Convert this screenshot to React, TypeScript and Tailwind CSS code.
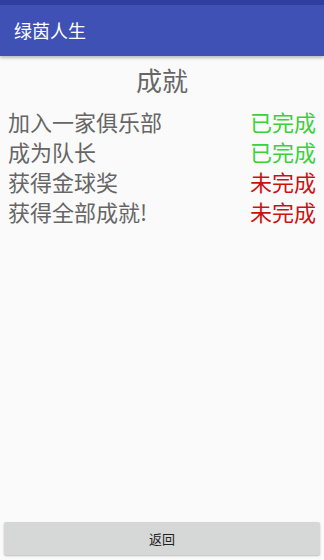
const font = { fontFamily: '"Noto Sans CJK SC", "Noto Sans", sans-serif' };

const items = [
  { name: "加入一家俱乐部", done: true },
  { name: "成为队长", done: true },
  { name: "获得金球奖", done: false },
  { name: "获得全部成就!", done: false },
];

export default function App() {
  return (
    <div className="w-[324px] h-[560px] flex flex-col bg-[#fafafa] overflow-hidden" style={font}>
      <div className="h-[5px] bg-[#303f9f]" />
      <div className="h-[51px] bg-[#3f51b5] flex items-center px-[14px] shadow-[0_2px_3px_rgba(0,0,0,0.25)] z-10">
        <span className="text-white text-[18px]">绿茵人生</span>
      </div>
      <div className="flex-1 flex flex-col px-[8px]">
        <div className="text-center text-[26px] leading-[34px] text-[#666666] pt-[7px]">成就</div>
        <div className="flex flex-col mt-[9px]">
          {items.map((it) => (
            <div key={it.name} className="flex justify-between text-[22px] leading-[30px]">
              <span className="text-[#666666]">{it.name}</span>
              <span className={it.done ? "text-[#3ad13a]" : "text-[#cc1111]"}>
                {it.done ? "已完成" : "未完成"}
              </span>
            </div>
          ))}
        </div>
      </div>
      <div className="px-[4px] pb-[5px]">
        <button className="w-full h-[33px] bg-[#d6d7d7] rounded-[2px] shadow-[0_1px_2px_rgba(0,0,0,0.25)] text-[13px] text-[#222222]">
          返回
        </button>
      </div>
    </div>
  );
}
